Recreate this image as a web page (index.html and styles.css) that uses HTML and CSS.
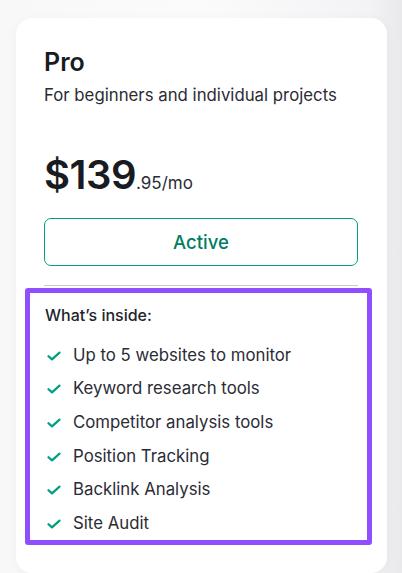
FILE: index.html
```html
<!DOCTYPE html>
<html lang="en">
<head>
    <meta charset="UTF-8">
    <meta name="viewport" content="width=device-width, initial-scale=1.0">
    <title>Pro plan</title>
    <link rel="stylesheet" href="styles.css">
</head>
<body>
    <div class="card">
        <h2 class="plan">Pro</h2>
        <p class="desc">For beginners and individual projects</p>
        <div class="price">
            <span class="amount">$139</span><span class="cents">.95/mo</span>
        </div>
        <a href="#" class="btn">Active</a>
        <hr class="divider">
        <div class="inside">
            <div class="inside__title">What’s inside:</div>
            <ul class="features">
                <li><svg class="check" viewBox="0 0 14 10"><path d="M1.5 5.2 5 8.4 12.5 1.6" /></svg>Up to 5 websites to monitor</li>
                <li><svg class="check" viewBox="0 0 14 10"><path d="M1.5 5.2 5 8.4 12.5 1.6" /></svg>Keyword research tools</li>
                <li><svg class="check" viewBox="0 0 14 10"><path d="M1.5 5.2 5 8.4 12.5 1.6" /></svg>Competitor analysis tools</li>
                <li><svg class="check" viewBox="0 0 14 10"><path d="M1.5 5.2 5 8.4 12.5 1.6" /></svg>Position Tracking</li>
                <li><svg class="check" viewBox="0 0 14 10"><path d="M1.5 5.2 5 8.4 12.5 1.6" /></svg>Backlink Analysis</li>
                <li><svg class="check" viewBox="0 0 14 10"><path d="M1.5 5.2 5 8.4 12.5 1.6" /></svg>Site Audit</li>
            </ul>
        </div>
    </div>
</body>
</html>
```

FILE: styles.css
```css
* {
    box-sizing: border-box;
}
body {
    margin: 0;
    padding: 18px 15px 0 16px;
    background: linear-gradient(90deg, #f8f8f9 0%, #fbfbfc 50%, #f3f3f5 92%, #e9e9ec 100%);
    font-family: Inter, "Noto Sans", sans-serif;
    color: #191b23;
    height: 573px;
    overflow: hidden;
}
.card {
    background: #fff;
    border-radius: 16px;
    padding: 28px 29px 28px 28px;
    box-shadow: 0 2px 12px rgba(30, 30, 50, 0.04);
}
.plan {
    margin: 0;
    font-size: 25px;
    font-weight: 600;
    line-height: 32px;
}
.desc {
    margin: 6px 0 0;
    font-size: 16.8px;
    line-height: 22px;
    color: #2a2c35;
}
.price {
    margin-top: 45px;
    display: flex;
    align-items: baseline;
}
.amount {
    font-size: 40px;
    font-weight: 600;
    line-height: 48px;
    letter-spacing: -0.5px;
}
.cents {
    font-size: 17px;
    color: #2a2c35;
}
.btn {
    display: flex;
    justify-content: center;
    align-items: center;
    margin-top: 19px;
    height: 48px;
    border: 1px solid #009f81;
    border-radius: 7px;
    text-decoration: none;
    color: #007c65;
    font-size: 18.5px;
    font-weight: 500;
}
.divider {
    margin: 19px 0 0;
    border: 0;
    border-top: 1px solid #c8c8cc;
}
.inside {
    margin: 2px -14px 0 -19px;
    border: 5px solid #8f4fff;
    border-radius: 3px;
    padding: 11px 14px 0 15px;
}
.inside__title {
    font-size: 16px;
    font-weight: 500;
    line-height: 22px;
    color: #22242c;
}
.features {
    list-style: none;
    margin: 12px 0 0;
    padding: 0;
}
.features li {
    display: flex;
    align-items: center;
    height: 33.6px;
    font-size: 16.8px;
    color: #2a2c35;
}
.check {
    width: 14px;
    height: 10px;
    margin: 2px 12px 0 2px;
    fill: none;
    stroke: #009f81;
    stroke-width: 2.2;
    stroke-linecap: round;
    stroke-linejoin: round;
}
```
